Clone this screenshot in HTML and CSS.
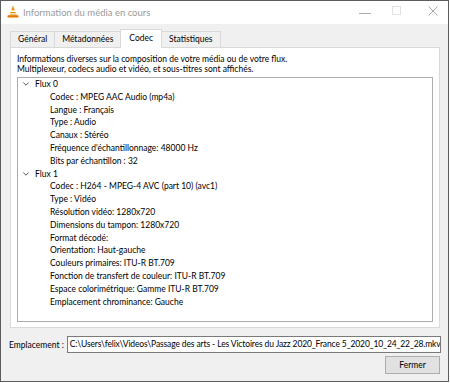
FILE: index.html
```html
<!DOCTYPE html>
<html lang="fr">
<head>
    <meta charset="UTF-8">
    <title>Information du média en cours</title>
    <link rel="stylesheet" href="styles.css">
</head>
<body>
    <div class="window">
        <div class="titlebar">
            <svg class="app-icon" width="12" height="13" viewBox="0 0 12 13">
                <path d="M6 0.5 L9.6 10.5 H2.4 Z" fill="#f18a00"/>
                <path d="M4.3 5.2 H7.7 L8.3 6.9 H3.7 Z" fill="#fff"/>
                <path d="M3.2 8.3 H8.8 L9.3 9.6 H2.7 Z" fill="#fff"/>
                <rect x="0.5" y="10.3" width="11" height="2.2" rx="0.6" fill="#e57600"/>
            </svg>
            <span class="title">Information du média en cours</span>
            <div class="controls">
                <svg class="ctl-min" width="12" height="10" viewBox="0 0 12 10"><path d="M0 5.5 H12" stroke="#aaa" stroke-width="1"/></svg>
                <svg class="ctl-max" width="9" height="9" viewBox="0 0 9 9"><rect x="0.5" y="0.5" width="8" height="8" fill="none" stroke="#e2e2e2"/></svg>
                <svg class="ctl-close" width="10" height="10" viewBox="0 0 10 10"><path d="M0.5 0.5 L9.5 9.5 M9.5 0.5 L0.5 9.5" stroke="#aaa" stroke-width="1"/></svg>
            </div>
        </div>
        <div class="content">
            <div class="tabs">
                <div class="tab">Général</div>
                <div class="tab">Métadonnées</div>
                <div class="tab active">Codec</div>
                <div class="tab">Statistiques</div>
            </div>
            <div class="panel">
                <p class="desc">Informations diverses sur la composition de votre média ou de votre flux.<br>Multiplexeur, codecs audio et vidéo, et sous-titres sont affichés.</p>
                <div class="tree">
                    <div class="row parent"><svg class="arrow" width="6" height="4" viewBox="0 0 6 4"><path d="M0.3 0.5 L3 3.2 L5.7 0.5" fill="none" stroke="#555" stroke-width="1"/></svg>Flux 0</div>
                    <div class="row child">Codec : MPEG AAC Audio (mp4a)</div>
                    <div class="row child">Langue : Français</div>
                    <div class="row child">Type : Audio</div>
                    <div class="row child">Canaux : Stéréo</div>
                    <div class="row child">Fréquence d'échantillonnage: 48000 Hz</div>
                    <div class="row child">Bits par échantillon : 32</div>
                    <div class="row parent"><svg class="arrow" width="6" height="4" viewBox="0 0 6 4"><path d="M0.3 0.5 L3 3.2 L5.7 0.5" fill="none" stroke="#555" stroke-width="1"/></svg>Flux 1</div>
                    <div class="row child">Codec : H264 - MPEG-4 AVC (part 10) (avc1)</div>
                    <div class="row child">Type : Vidéo</div>
                    <div class="row child">Résolution vidéo: 1280x720</div>
                    <div class="row child">Dimensions du tampon: 1280x720</div>
                    <div class="row child">Format décodé:</div>
                    <div class="row child">Orientation: Haut-gauche</div>
                    <div class="row child">Couleurs primaires: ITU-R BT.709</div>
                    <div class="row child">Fonction de transfert de couleur: ITU-R BT.709</div>
                    <div class="row child">Espace colorimétrique: Gamme ITU-R BT.709</div>
                    <div class="row child">Emplacement chrominance: Gauche</div>
                </div>
            </div>
            <div class="location">
                <span class="label">Emplacement :</span>
                <div class="path">C:\Users\felix\Videos\Passage des arts - Les Victoires du Jazz 2020_France 5_2020_10_24_22_28.mkv</div>
            </div>
            <div class="actions">
                <button class="btn">Fermer</button>
            </div>
        </div>
    </div>
</body>
</html>
```

FILE: styles.css
```css
body {
    margin: 0;
    background-color: #ffffff;
    font-family: Lato, "Noto Sans", Arial, sans-serif;
    font-size: 8.5px;
    color: #000;
}

.window {
    width: 449px;
    height: 382px;
    box-sizing: border-box;
    border: 1px solid #5c5c5c;
    background-color: #f0f0f0;
    display: flex;
    flex-direction: column;
}

.titlebar {
    height: 23px;
    background-color: #ffffff;
    display: flex;
    align-items: center;
    padding-left: 6px;
}

.app-icon {
    margin-right: 4px;
    margin-top: -2px;
}

.title {
    color: #9a9a9a;
    font-size: 9.5px;
    flex: 1;
}

.controls {
    display: flex;
    align-items: center;
    padding-right: 10px;
}

.ctl-max {
    margin-left: 21px;
    margin-top: -4px;
}

.ctl-close {
    margin-left: 27px;
    margin-top: -4px;
}

.content {
    flex: 1;
    padding: 6px 8px 0 9px;
    display: flex;
    flex-direction: column;
}

.tabs {
    display: flex;
    height: 17px;
    align-items: flex-end;
    position: relative;
    z-index: 1;
}

.tab {
    height: 15px;
    line-height: 15px;
    padding: 0 7px;
    border: 1px solid #d9d9d9;
    border-bottom: none;
    margin-right: -1px;
    background-color: #f0f0f0;
}

.tab.active {
    height: 18px;
    line-height: 16px;
    padding: 0 8px;
    background-color: #ffffff;
    margin-bottom: -1px;
    position: relative;
    z-index: 2;
}

.panel {
    height: 281px;
    box-sizing: border-box;
    background-color: #ffffff;
    border: 1px solid #d9d9d9;
    padding: 6px 6px 5px 6px;
    display: flex;
    flex-direction: column;
}

.desc {
    margin: 0 0 3px 0;
    line-height: 10px;
}

.tree {
    flex: 1;
    border: 1px solid #adadad;
}

.row {
    height: 12.8px;
    line-height: 12.8px;
    white-space: nowrap;
}

.row.parent {
    padding-left: 5px;
}

.row.child {
    padding-left: 32px;
}

.arrow {
    margin-right: 6px;
    vertical-align: 1px;
}

.location {
    display: flex;
    align-items: center;
    margin-top: 8px;
    margin-left: -1px;
    margin-right: -1px;
}

.label {
    margin-right: 3px;
}

.path {
    flex: 1;
    height: 17px;
    box-sizing: border-box;
    border: 1px solid #7a7a7a;
    background-color: #ffffff;
    line-height: 15px;
    padding-left: 2px;
    letter-spacing: -0.12px;
    white-space: nowrap;
    overflow: hidden;
}

.actions {
    display: flex;
    justify-content: flex-end;
    margin-top: 3px;
}

.btn {
    width: 55px;
    height: 18px;
    padding: 0;
    font-family: Lato, "Noto Sans", Arial, sans-serif;
    font-size: 8.5px;
    background-color: #e1e1e1;
    border: 1px solid #adadad;
}
```
